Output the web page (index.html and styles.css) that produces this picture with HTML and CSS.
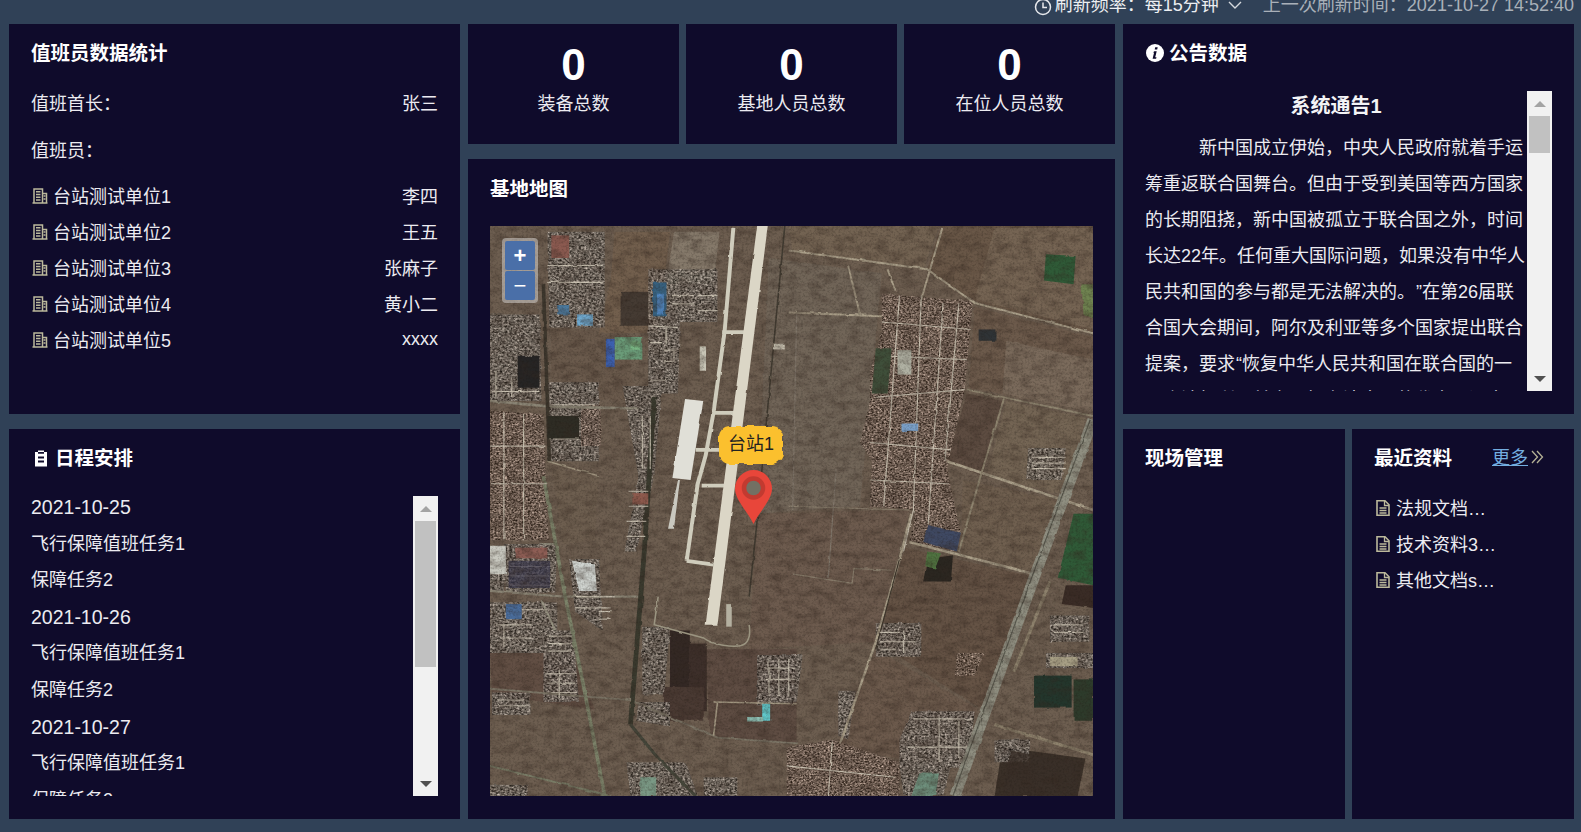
FILE: index.html
```html
<!DOCTYPE html>
<html lang="zh-CN">
<head>
<meta charset="utf-8">
<title>值班大屏</title>
<link rel="stylesheet" href="styles.css">
</head>
<body>
<svg class="defs" aria-hidden="true">
  <symbol id="i-building" viewBox="0 0 16 16">
    <path d="M2 14.500V1h8.500v13.500M10.500 5.500h4v9M.5 15h15" fill="none" stroke="currentColor" stroke-width="1.500"/>
    <path d="M4 3.800h4.500M4 6.500h4.500M4 9.200h4.500M4 12h4.500M11.500 8h2M11.500 11h2" stroke="currentColor" stroke-width="1.400"/>
  </symbol>
  <symbol id="i-doc" viewBox="0 0 16 16">
    <path d="M2 .8h8l4 4v10.400H2z" fill="none" stroke="currentColor" stroke-width="1.600"/>
    <path d="M9.500 1v4.500H14M4.500 8h7M4.500 10.500h7M4.500 13h7" fill="none" stroke="currentColor" stroke-width="1.300"/>
  </symbol>
</svg>

<header class="topbar">
  <svg class="clock" viewBox="0 0 18 18"><circle cx="9" cy="7" r="7.500" fill="none" stroke="currentColor" stroke-width="1.500"/><path d="M9 2.500V7.500H13" fill="none" stroke="currentColor" stroke-width="1.500"/></svg>
  <span class="refresh">刷新频率&#65306;每15分钟</span>
  <svg class="chevron" viewBox="0 0 14 8"><path d="M1 1l6 6 6-6" fill="none" stroke="currentColor" stroke-width="1.400"/></svg>
  <span class="last">上一次刷新时间&#65306;2021-10-27 14:52:40</span>
</header>

<main class="dash">
  <div class="col">
    <section class="panel half">
      <h2 class="title">值班员数据统计</h2>
      <div class="row row-first"><span>值班首长&#65306;</span><span>张三</span></div>
      <div class="row row-second"><span>值班员&#65306;</span></div>
      <ul class="units">
        <li class="row"><span class="unit"><svg class="ico"><use href="#i-building"/></svg>台站测试单位1</span><span>李四</span></li>
        <li class="row"><span class="unit"><svg class="ico"><use href="#i-building"/></svg>台站测试单位2</span><span>王五</span></li>
        <li class="row"><span class="unit"><svg class="ico"><use href="#i-building"/></svg>台站测试单位3</span><span>张麻子</span></li>
        <li class="row"><span class="unit"><svg class="ico"><use href="#i-building"/></svg>台站测试单位4</span><span>黄小二</span></li>
        <li class="row"><span class="unit"><svg class="ico"><use href="#i-building"/></svg>台站测试单位5</span><span class="xxxx">xxxx</span></li>
      </ul>
    </section>
    <section class="panel half">
      <h2 class="title"><svg class="title-ico clip" viewBox="0 0 16 18"><path d="M5 1.500h6V3h3v14.500H2V3h3z" fill="#fff"/><path d="M5 3.800h6M5 8.500h6M5 12.500h6" stroke="#0f0b2b" stroke-width="1.800"/></svg>日程安排</h2>
      <div class="scrollbox">
        <div class="scroll-content schedule">
          <p class="date">2021-10-25</p><p>飞行保障值班任务1</p><p>保障任务2</p>
          <p class="date">2021-10-26</p><p>飞行保障值班任务1</p><p>保障任务2</p>
          <p class="date">2021-10-27</p><p>飞行保障值班任务1</p><p>保障任务2</p>
        </div>
        <div class="sb"><span class="sb-btn"><i class="tri-up"></i></span><span class="thumb thumb-long"></span><span class="sb-btn sb-end"><i class="tri-down"></i></span></div>
      </div>
    </section>
  </div>

  <div class="col">
    <div class="stats">
      <section class="panel stat"><strong>0</strong><span>装备总数</span></section>
      <section class="panel stat"><strong>0</strong><span>基地人员总数</span></section>
      <section class="panel stat"><strong>0</strong><span>在位人员总数</span></section>
    </div>
    <section class="panel mapcard">
      <h2 class="title">基地地图</h2>
      <div class="map">
        <svg class="sat" viewBox="25 15 1524 1515" preserveAspectRatio="none" aria-hidden="true">
          <defs>
            <filter id="soft" filterUnits="userSpaceOnUse" x="25" y="15" width="1524" height="1515" color-interpolation-filters="sRGB">
              <feTurbulence type="fractalNoise" baseFrequency="0.035" numOctaves="2" seed="4" result="n"/>
              <feDisplacementMap in="SourceGraphic" in2="n" scale="6" xChannelSelector="R" yChannelSelector="G" result="d"/>
              <feGaussianBlur in="d" stdDeviation="1.800"/>
            </filter>
            <filter id="grain" filterUnits="userSpaceOnUse" x="25" y="15" width="1524" height="1515" color-interpolation-filters="sRGB">
              <feTurbulence type="fractalNoise" baseFrequency="0.03 0.05" numOctaves="4" seed="11"/>
              <feColorMatrix values="0 0 0 0 .2  0 0 0 0 .15  0 0 0 0 .12  0 0 0 .9 -.36"/>
            </filter>
            <filter id="fine" filterUnits="userSpaceOnUse" x="25" y="15" width="1524" height="1515" color-interpolation-filters="sRGB">
              <feTurbulence type="fractalNoise" baseFrequency="0.18" numOctaves="2" seed="21"/>
              <feColorMatrix values="0 0 0 0 .1  0 0 0 0 .08  0 0 0 0 .06  0 0 0 .6 -.27"/>
              <feGaussianBlur stdDeviation="0.800"/>
            </filter>
            <filter id="speckle" x="0" y="0" width="1" height="1" color-interpolation-filters="sRGB">
              <feTurbulence type="fractalNoise" baseFrequency="0.16 0.2" numOctaves="2" seed="3"/>
              <feColorMatrix values="1.300 0 0 0 -.2  1.250 0 0 0 -.2  1.200 0 0 0 -.2  0 0 0 0 1"/>
              <feGaussianBlur stdDeviation="1.500" result="s"/>
              <feComposite in="s" in2="SourceAlpha" operator="in"/>
            </filter>
            <filter id="speckleWarm" x="0" y="0" width="1" height="1" color-interpolation-filters="sRGB">
              <feTurbulence type="fractalNoise" baseFrequency="0.19 0.24" numOctaves="2" seed="8"/>
              <feColorMatrix values="1.300 0 0 0 -.18  1.200 0 0 0 -.2  1.150 0 0 0 -.22  0 0 0 0 1"/>
              <feGaussianBlur stdDeviation="1.300" result="s"/>
              <feComposite in="s" in2="SourceAlpha" operator="in"/>
            </filter>
            <filter id="wavy" x="-10%" y="-10%" width="120%" height="120%">
              <feTurbulence type="fractalNoise" baseFrequency="0.11" numOctaves="1" seed="6" result="n"/>
              <feDisplacementMap in="SourceGraphic" in2="n" scale="6" xChannelSelector="R" yChannelSelector="G"/>
            </filter>
          </defs>
          <g filter="url(#soft)">
            <rect x="25" y="15" width="1524" height="1515" fill="#6d5e50"/>
            <path d="M780 15H1160L1120 130 790 85z" fill="#736352"/>
            <path d="M1165 15H1549V300L1250 215 1130 130z" fill="#695747"/>
            <path d="M1300 20H1549V290L1250 210z" fill="#756453"/>
            <path d="M730 100L1015 140 985 480 960 760 700 780z" fill="#716558"/>
            <path d="M1250 230L1549 310V505L1235 445z" fill="#6c5a4b"/>
            <path d="M1330 320L1549 370V510L1320 460z" fill="#7a6a5b"/>
            <path d="M1230 460L1320 480 1270 680 1180 640z" fill="#5d4c41"/>
            <path d="M1330 480L1530 525 1480 730 1280 680z" fill="#746554"/>
            <path d="M1220 690L1470 745 1400 940 1215 890z" fill="#6f5f4f"/>
            <path d="M700 780L1085 770 1000 1120 680 1140z" fill="#6d5b4e"/>
            <path d="M1075 870L1390 945 1270 1300 1000 1120z" fill="#655345"/>
            <path d="M1000 1140L1260 1300 1160 1450 900 1400z" fill="#6c5a4c"/>
            <path d="M570 1140H800V1390L580 1370z" fill="#5f4d43"/>
            <path d="M25 1150H230L290 1300 30 1260z" fill="#624f44"/>
            <path d="M180 660L300 680 290 850 210 860z" fill="#6d5e4f"/>
            <path d="M180 290H370L390 480 180 470z" fill="#6a5a4c"/>
            <path d="M340 30H480L450 300 300 300 330 160z" fill="#725f4d"/>
            <path d="M490 30H605L590 170 470 170z" fill="#85796a"/>
            <rect x="355" y="190" width="70" height="90" fill="#453b33"/>
            <path d="M1430 90L1505 95 1500 170 1425 160z" fill="#2f5a37"/>
            <path d="M1500 780H1549V970L1460 950z" fill="#2f5a37"/>
            <path d="M1520 170H1549V260L1525 250z" fill="#6f8350"/>
            <path d="M1130 900L1195 890 1190 960 1120 960z" fill="#2a2620"/>
            <path d="M1130 880L1165 885 1150 925 1125 920z" fill="#4f7240"/>
            <path d="M1480 970H1549V1030L1470 1020z" fill="#3a2c26"/>
            <rect x="1400" y="1210" width="95" height="85" fill="#23362c"/>
            <rect x="1500" y="1220" width="49" height="110" fill="#2d3b2b"/>
            <path d="M1320 1400L1530 1430 1510 1530H1300z" fill="#3a3028"/>
            <rect x="480" y="1090" width="50" height="180" fill="#332824"/>
            <rect x="528" y="1125" width="45" height="180" fill="#3d2f2a"/>
            <rect x="465" y="1240" width="100" height="90" fill="#4a3a33"/>
          </g>

          <g filter="url(#soft)">
            <g filter="url(#speckle)" opacity=".72">
              <path d="M25 250H150L155 480H25z"/>
              <path d="M170 30H315V285H175z"/>
              <path d="M170 430H300L300 640H170z"/>
              <path d="M360 440L460 440 440 680 395 880 365 880 400 680z"/>
              <path d="M425 130H600V270H505L500 460H425z"/>
              <path d="M25 865H70L60 985H25zM60 860H195L190 990H65z"/>
              <path d="M225 900H300L310 1090 240 1040z"/>
              <path d="M25 1015H195V1150H25z"/>
              <path d="M160 1090H235L250 1280H160z"/>
              <path d="M30 1255H125V1315H30z"/>
              <path d="M410 1080H480L465 1260 410 1260z"/>
              <path d="M400 1280H480L480 1345 395 1330z"/>
              <path d="M700 1155H815L800 1280 700 1290z"/>
              <path d="M1000 1070H1115V1160H1000z"/>
              <path d="M1090 1305H1250L1235 1455H1060V1380z"/>
              <path d="M1385 605H1480L1470 690H1380z"/>
              <path d="M1440 1050H1540V1120H1440z"/>
              <path d="M1430 1150H1549V1190H1430z"/>
              <path d="M370 1440H520L550 1530H380z"/>
              <path d="M565 1480H650V1530H565z"/>
              <path d="M1060 1450H1190L1170 1530H1070z"/>
              <path d="M905 1250H950L930 1380 905 1370z"/>
              <path d="M25 1500H120V1530H25z"/>
              <path d="M1300 1380H1390V1440H1300z"/>
            </g>
            <g filter="url(#speckleWarm)" opacity=".75">
              <path d="M1015 195L1245 215 1225 450 1180 660 1215 830 1200 880 1085 855 1100 770 985 760 990 640 960 590 985 480 985 400 1015 300z"/>
              <path d="M25 505L160 515 170 790 175 850H25z"/>
              <path d="M775 1400L890 1380 1060 1440V1530H775z"/>
              <path d="M255 490H305V600H255z"/>
              <path d="M1205 1150H1275L1250 1210H1200z"/>
            </g>

            <g fill="none" stroke="#aba08a" stroke-width="5">
              <path d="M780 80L1130 130 1250 220 1549 300"/>
              <path d="M1168 20L1115 210"/>
              <path d="M930 120L960 250M1030 130L1050 190"/>
              <path d="M780 245L1015 255"/>
              <path d="M1180 640L1549 770" stroke-width="7"/>
              <path d="M1085 855L1400 940" stroke-width="7"/>
              <path d="M1230 450L1549 520" stroke="#8f8570"/>
              <path d="M1325 470L1265 680 1210 880" stroke="#8f8570"/>
              <path d="M1090 780L1060 900 1000 1120 910 1390" stroke-width="6"/>
              <path d="M780 760L1085 770M790 940L940 965 945 925 1040 930" stroke="#8d8270" stroke-width="3"/>
              <path d="M800 250L790 770M900 660L880 950" stroke="#80766a" stroke-width="3"/>
              <path d="M1440 960L1349 1200M1300 1340L1549 1420" stroke="#8d816c" stroke-width="8"/>
              <path d="M25 480L180 495 400 500" stroke="#8c8676" stroke-width="7"/>
              <path d="M25 985L210 1000 400 1000" stroke="#8c8676" stroke-width="6"/>
              <path d="M25 1245L380 1275 600 1375 800 1390" stroke="#7d7667" stroke-width="5"/>
              <path d="M170 640L300 680M590 1280L800 1285M600 1280L590 1370" stroke="#a59a84" stroke-width="4"/>
              <path d="M25 1450L330 1530" stroke="#7b7e68" stroke-width="5"/>
              <path d="M155 860H190M155 1010L190 1090" stroke="#9a9685"/>
            </g>
            <g fill="none">
              <path d="M160 170L175 640" stroke="#3e382e" stroke-width="9"/>
              <path d="M440 470L415 880 380 1340" stroke="#3a3a2e" stroke-width="12"/>
              <path d="M380 1340L450 1430 545 1530" stroke="#45463a" stroke-width="8"/>
              <path d="M160 680L215 1000 260 1230 315 1530" stroke="#7c8269" stroke-width="9"/>
              <path d="M770 15L700 800 680 1000" stroke="#423c32" stroke-width="4"/>
              <path d="M1060 900L1000 1140" stroke="#3e362c" stroke-width="3"/>
              <path d="M1549 530L1400 950 1200 1530" stroke="#8f8e80" stroke-width="28"/>
              <path d="M1542 530L1394 950 1195 1530" stroke="#5b5b50" stroke-width="3"/>
            </g>
            <g fill="none" stroke="#c8c0b0" stroke-width="3">
              <path d="M1115 200L1095 770 1070 880M1210 220L1175 640M1060 200L1020 760M1170 220L1130 850"/>
              <path d="M1015 270L1240 290M1000 470L1225 450M985 590L1190 610M985 690L1185 700M1010 360L1230 370"/>
              <path d="M60 510V850M110 515V850M25 600H165M25 700H170M890 1385L880 1530M775 1450L1050 1480"/>
              <path d="M40 400V470M80 420V470M30 455H150M170 120H310M170 165H310M180 490H290M175 580H250"/>
              <path d="M425 280L500 285M470 285V330M465 345H490V375H465M430 325H460M430 425H470M410 520V660M430 520V660M375 720H425M375 760H425M370 800H420M370 840H415"/>
              <path d="M485 200H540M485 222H540M550 200H600M550 240H600"/>
              <path d="M75 920H175M75 945H175M75 970H175M60 1035H190M40 1075H130M50 1110H130M60 1075V1135"/>
              <path d="M1395 630H1480M1395 645H1480M1395 660H1480M1010 1095H1060M1010 1120H1100M1010 1140H1050M1070 1090V1150"/>
              <path d="M1095 1325H1245M1160 1320V1440M1080 1400H1230M1210 1330V1440M40 1290H120M45 1275H110M165 1205H245M170 1230H240M180 1255H245M200 1195V1270"/>
              <path d="M170 1105H230M170 1125H230M170 1145H230M730 1165V1265M755 1165V1265M780 1165V1265M720 1190H795M720 1220H795M1450 1075H1525M1450 1095H1525"/>
              <path d="M240 1000H340M240 1030H330M300 1040H330M300 1060H330"/>
            </g>
            <rect x="1065" y="540" width="42" height="20" fill="#7aa0c8"/>
            <path d="M1130 810L1215 830 1205 880 1120 855z" fill="#3f4963"/>
            <path d="M1000 340H1040L1030 460H990z" fill="#3f4f3a"/>
            <rect x="1055" y="345" width="35" height="65" fill="#b0b1a3"/>
            <rect x="180" y="40" width="45" height="60" fill="#8b5a50"/>
            <rect x="245" y="250" width="40" height="30" fill="#6fa9cf"/><rect x="195" y="225" width="30" height="25" fill="#4c7ba0"/>
            <rect x="95" y="360" width="55" height="85" fill="#252424"/>
            <rect x="170" y="520" width="80" height="60" fill="#2e2c24"/>
            <path d="M340 310H410V370H340z" fill="#6a9b78"/><rect x="318" y="315" width="22" height="75" fill="#3c60b0"/><rect x="380" y="322" width="24" height="22" fill="#79b784"/>
            <rect x="437" y="165" width="34" height="90" fill="#37617f"/><rect x="447" y="195" width="18" height="55" fill="#4f86c0"/>
            <rect x="90" y="870" width="80" height="28" fill="#8e5e55"/><rect x="72" y="905" width="105" height="72" fill="#35334a" opacity=".7"/>
            <rect x="25" y="865" width="40" height="75" fill="#c8c8bf"/><path d="M232 905L290 915 295 985H250z" fill="#cfd3cf"/>
            <rect x="385" y="725" width="40" height="30" fill="#8e5a4d"/>
            <rect x="65" y="1020" width="40" height="40" fill="#4a6d9c"/>
            <rect x="713" y="1285" width="20" height="45" fill="#62cdd0"/><rect x="675" y="1320" width="40" height="12" fill="#8fc4b8"/>
            <rect x="1260" y="290" width="45" height="30" fill="#2f3336"/><rect x="740" y="328" width="30" height="15" fill="#c5bfae"/>
            <rect x="555" y="335" width="16" height="65" fill="#c8c5b6"/>
            <rect x="1440" y="1160" width="70" height="25" fill="#a8a086"/>
            <path d="M1110 1470H1160L1150 1530H1090z" fill="#6e8f7c"/>
            <rect x="405" y="1480" width="40" height="50" fill="#7b9a86"/>
            <path d="M1340 1410L1520 1440 1510 1530H1320z" fill="#3a3028" opacity=".8"/>
          </g>
          <rect x="25" y="15" width="1524" height="1515" filter="url(#grain)"/>
          <rect x="25" y="15" width="1524" height="1515" filter="url(#fine)"/>
          <g filter="url(#soft)">
            <path d="M660 1130C640 1135 590 1130 565 1110L440 1075 450 1000M680 1075C685 1110 675 1125 660 1130" fill="none" stroke="#9a9480" stroke-width="4"/>
            <g fill="none" stroke="#cfccbc" stroke-width="10">
              <path d="M640 20L618 295 590 510 570 625 550 700 522 905"/>
              <path d="M612 297H672M590 512H648M545 610H612M560 705H622M522 905L590 915"/>
            </g>
            <path d="M700 15H727L600 1075H570z" fill="#dbd6c6"/>
            <rect x="622" y="1020" width="14" height="60" fill="#b4b0a0"/>
            <path d="M518 475L564 480 532 690 486 685z" fill="#e0dfd7"/>
            <path d="M500 690H505L490 820H475z" fill="#c9c8bf"/>
          </g>
        </svg>
        <div class="zoom"><button class="zoom-btn">+</button><button class="zoom-btn zoom-minus">−</button></div>
        <span class="map-label">台站1</span>
        <svg class="pin" viewBox="0 0 37 54"><path d="M18.500 54C13 42 0 30 0 18.500a18.500 18.500 0 0 1 37 0C37 30 24 42 18.500 54z" fill="#e8463a"/><circle cx="18.500" cy="18" r="9.500" fill="#737063" stroke="#c23a30" stroke-width="4.500"/></svg>
      </div>
    </section>
  </div>

  <div class="col">
    <section class="panel half">
      <h2 class="title"><svg class="title-ico info" viewBox="0 0 18 18"><circle cx="9" cy="9" r="9" fill="#fff"/><path d="M9.200 3.300h2.500l-.5 2.300H8.700zM8.300 7.200h2.400l-1.500 6.100h1.300l-.4 1.400H6.600l1.500-6.100H7z" fill="#0f0b2b"/></svg>公告数据</h2>
      <div class="scrollbox">
        <article class="scroll-content notice">
          <h3 class="notice-title">系统通告1</h3>
          <p class="notice-body">新中国成立伊始&#65292;中央人民政府就着手运筹重返联合国舞台。但由于受到美国等西方国家的长期阻挠&#65292;新中国被孤立于联合国之外&#65292;时间长达22年。任何重大国际问题&#65292;如果没有中华人民共和国的参与都是无法解决的。<span class="quote">”</span>在第26届联合国大会期间&#65292;阿尔及利亚等多个国家提出联合提案&#65292;要求<span class="quote">“</span>恢复中华人民共和国在联合国的一切合法权利&#65292;并立即把台湾当局的代表驱逐出去。</p>
        </article>
        <div class="sb"><span class="sb-btn"><i class="tri-up"></i></span><span class="thumb thumb-short"></span><span class="sb-btn sb-end"><i class="tri-down"></i></span></div>
      </div>
    </section>
    <div class="lower">
      <section class="panel lower-card"><h2 class="title">现场管理</h2></section>
      <section class="panel lower-card">
        <div class="head">
          <h2 class="title">最近资料</h2>
          <a class="more" href="#">更多</a>
          <svg class="dbl" viewBox="0 0 13 14"><path d="M1 1l5.500 6L1 13M6 1l5.500 6L6 13" fill="none" stroke="currentColor" stroke-width="1.300"/></svg>
        </div>
        <ul class="docs">
          <li><svg class="ico"><use href="#i-doc"/></svg><span class="doc-name">法规文档管理办法.pdf</span></li>
          <li><svg class="ico"><use href="#i-doc"/></svg><span class="doc-name">技术资料3说明书.pdf</span></li>
          <li><svg class="ico"><use href="#i-doc"/></svg><span class="doc-name">其他文档sss.docx</span></li>
        </ul>
      </section>
    </div>
  </div>
</main>
</body>
</html>
```
FILE: styles.css
```css
* { box-sizing: border-box; }
html, body { margin: 0; height: 100%; }
body {
  width: 1581px;
  height: 832px;
  overflow: hidden;
  background: #304157;
  color: #ecebf1;
  font: 18px/36px "Liberation Sans", "Noto Sans CJK SC", sans-serif;
  text-spacing-trim: space-all;
}
h2, h3, p, ul { margin: 0; padding: 0; }
ul { list-style: none; }
.defs { display: none; }

.topbar {
  height: 24px;
  padding-right: 7px;
  display: flex;
  justify-content: flex-end;
  align-items: flex-start;
  line-height: 11px;
  white-space: pre;
}
.clock { width: 18px; height: 18px; margin-right: 3px; color: #e6e8ec; }
.refresh { color: #eceef1; }
.chevron { width: 14px; height: 8px; margin: 1px 21px 0 9px; color: #d5d9de; }
.last { color: #a9b0b9; }

.dash {
  height: 808px;
  padding: 0 7px 13px 9px;
  display: grid;
  grid-template-columns: 451px 647px 451px;
  gap: 8px;
}
.col { display: flex; flex-direction: column; gap: 15px; min-height: 0; }
.panel { background: #0f0b2b; padding: 14px 22px; }
.half { height: 390px; flex: none; }
.title {
  font-size: 19.500px;
  font-weight: 700;
  line-height: 30px;
  color: #fff;
  display: flex;
  align-items: center;
}
.title-ico { flex: none; }
.clip { width: 16px; height: 18px; margin: 0 6px 0 2px; }
.info { width: 18px; height: 18px; margin: 0 5px 0 1px; }

.row { display: flex; justify-content: space-between; height: 36px; }
.row-first { margin-top: 18px; }
.row-second { margin-top: 11px; }
.units { margin-top: 10px; }
.unit { display: flex; align-items: center; }
.ico { width: 16px; height: 16px; flex: none; margin: 0 5px 3px 1px; color: #bcb99c; }
.xxxx { line-height: 32px; }

.scrollbox { display: flex; height: 300px; margin-top: 23px; }
.scroll-content { flex: 1; min-width: 0; overflow: hidden; }
.schedule p { line-height: 22px; margin-bottom: 14.6px; }
.schedule .date { font-size: 19.500px; }
.notice-title { font-size: 20px; font-weight: 700; line-height: 30px; text-align: center; color: #f4f4f6; }
.notice-body { margin-top: 9px; line-height: 36px; text-indent: 54px; }
.quote { font-family: "Liberation Sans", sans-serif; margin-left: 1px; }

.sb {
  flex: none;
  width: 25px;
  padding: 0 2px;
  background: #f1f1f1;
  display: flex;
  flex-direction: column;
}
.sb-btn { flex: none; height: 25px; display: flex; align-items: center; justify-content: center; }
.sb-end { margin-top: auto; }
.tri-up, .tri-down { width: 0; height: 0; border: 6px solid transparent; }
.tri-up { border-top: 0; border-bottom-color: #a3a3a3; }
.tri-down { border-bottom: 0; border-top-color: #505050; }
.thumb { flex: none; background: #c1c1c1; }
.thumb-long { height: 146px; }
.thumb-short { height: 37px; }

.stats { display: grid; grid-template-columns: repeat(3, 211px); gap: 7px; height: 120px; flex: none; }
.stat { padding: 16px 0 0; display: flex; flex-direction: column; align-items: center; }
.stat strong { font-size: 44px; line-height: 49px; color: #fff; }
.stat span { line-height: 30px; }

.mapcard { flex: 1; min-height: 0; display: flex; flex-direction: column; padding-top: 15px; padding-bottom: 23px; }
.map { position: relative; flex: 1; margin-top: 22px; overflow: hidden; background: #6c5c4f; }
.sat { display: block; width: 100%; height: 100%; }
.zoom {
  position: absolute;
  left: 12px;
  top: 12px;
  padding: 3px;
  display: flex;
  flex-direction: column;
  gap: 1px;
  background: rgba(255, 255, 255, 0.4);
  border-radius: 4px;
}
.zoom-btn {
  width: 30px;
  height: 29px;
  padding: 0;
  border: 0;
  border-radius: 2px;
  background: #4a6fa8;
  color: #fff;
  font: 700 22px/28px "Liberation Sans", sans-serif;
}
.zoom-minus { font-weight: 400; }
.map-label {
  position: absolute;
  left: 229px;
  top: 200px;
  width: 64px;
  height: 38px;
  text-align: center;
  line-height: 36px;
  color: #222;
  isolation: isolate;
}
.map-label::before {
  content: "";
  position: absolute;
  inset: 0;
  z-index: -1;
  background: #fbc02d;
  border-radius: 11px;
  filter: url(#wavy);
}
.pin { position: absolute; left: 245px; top: 244px; width: 37px; height: 54px; }

.lower { display: grid; grid-template-columns: 222px 222px; gap: 7px; height: 390px; flex: none; }
.lower-card { padding-right: 10px; }
.head { display: flex; align-items: center; }
.more { margin-left: 40px; color: #74aee0; text-decoration: underline; line-height: 28px; }
.dbl { width: 13px; height: 14px; margin: 0 0 2px 3px; color: #b5b296; }
.docs { margin-top: 18px; }
.docs li { display: flex; align-items: center; height: 36px; }
.docs .ico { margin: 0 5px 3px 1px; }
.doc-name { width: 104px; overflow: hidden; white-space: nowrap; text-overflow: ellipsis; }
```
